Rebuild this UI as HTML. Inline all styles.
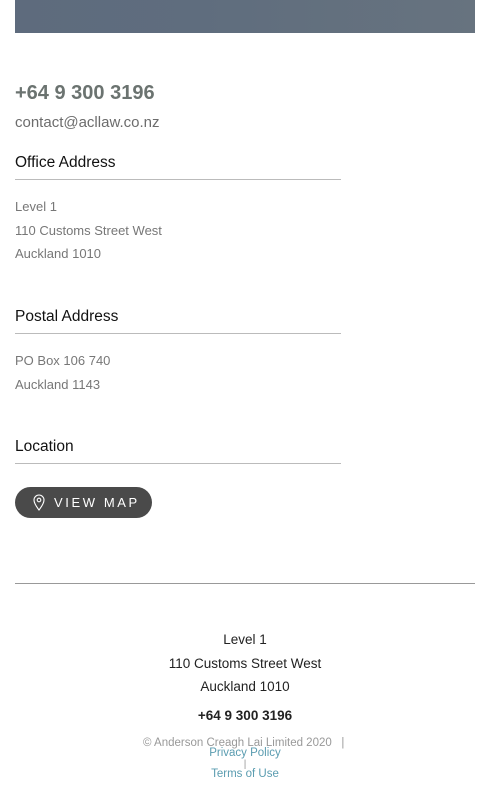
<!DOCTYPE html>
<html><head><style>
body{margin:0;width:490px;height:796px;background:#fff;font-family:"Liberation Sans",sans-serif;position:relative;overflow:hidden}
.a{position:absolute;white-space:nowrap}
.hr{position:absolute;left:15px;width:326px;height:1px;background:#bbb}
.g{color:#777;font-size:13px}
.h{color:#111;font-size:15.5px}
.c{left:0;width:490px;text-align:center}
</style></head><body>
<div class="a" style="left:15px;top:0;width:460px;height:33px;background:linear-gradient(90deg,#5e6b7d,#5f6d7e 40%,#67737f)"></div>
<div class="a" style="left:15px;top:82px;font-size:20px;font-weight:bold;color:#6b7370">+64 9 300 3196</div>
<div class="a" style="left:15px;top:114px;font-size:15px;color:#6c6c6c">contact@acllaw.co.nz</div>
<div class="a h" style="left:15px;top:154px">Office Address</div>
<div class="hr" style="top:179px"></div>
<div class="a g" style="left:15px;top:199px">Level 1</div>
<div class="a g" style="left:15px;top:223px">110 Customs Street West</div>
<div class="a g" style="left:15px;top:246px">Auckland 1010</div>
<div class="a h" style="left:15px;top:308px">Postal Address</div>
<div class="hr" style="top:333px"></div>
<div class="a g" style="left:15px;top:353px">PO Box 106 740</div>
<div class="a g" style="left:15px;top:377px">Auckland 1143</div>
<div class="a h" style="left:15px;top:438px">Location</div>
<div class="hr" style="top:463px"></div>
<div class="a" style="left:15px;top:487px;width:137px;height:31px;border-radius:16px;background:#4a4a4a;color:#fff;font-size:13px;letter-spacing:2.6px;line-height:31px">
<svg style="position:absolute;left:18px;top:7px" width="12" height="17" viewBox="0 0 12 17"><path d="M6 16C6 16 1 9.5 1 6A5 5 0 0 1 11 6C11 9.5 6 16 6 16Z" fill="none" stroke="#fff" stroke-width="1.1"/><circle cx="6" cy="6" r="1.8" fill="none" stroke="#fff" stroke-width="1.1"/></svg>
<span style="position:absolute;left:39px">VIEW MAP</span></div>
<div class="a" style="left:15px;top:583px;width:460px;height:1px;background:#999"></div>
<div class="a c" style="top:632px;font-size:13.5px;color:#222">Level 1</div>
<div class="a c" style="top:656px;font-size:13.5px;color:#222">110 Customs Street West</div>
<div class="a c" style="top:679px;font-size:13.5px;color:#222">Auckland 1010</div>
<div class="a c" style="top:708px;font-size:13.5px;font-weight:bold;color:#222">+64 9 300 3196</div>
<div class="a" style="left:143px;top:737px;font-size:11.5px;color:#999">© Anderson Creagh Lai Limited 2020 &nbsp;&nbsp;|</div>
<div class="a c" style="top:747px;font-size:11.5px;color:#5a9cb0">Privacy Policy</div>
<div class="a c" style="top:759px;font-size:10px;color:#999">|</div>
<div class="a c" style="top:768px;font-size:11.5px;color:#5a9cb0">Terms of Use</div>
</body></html>
